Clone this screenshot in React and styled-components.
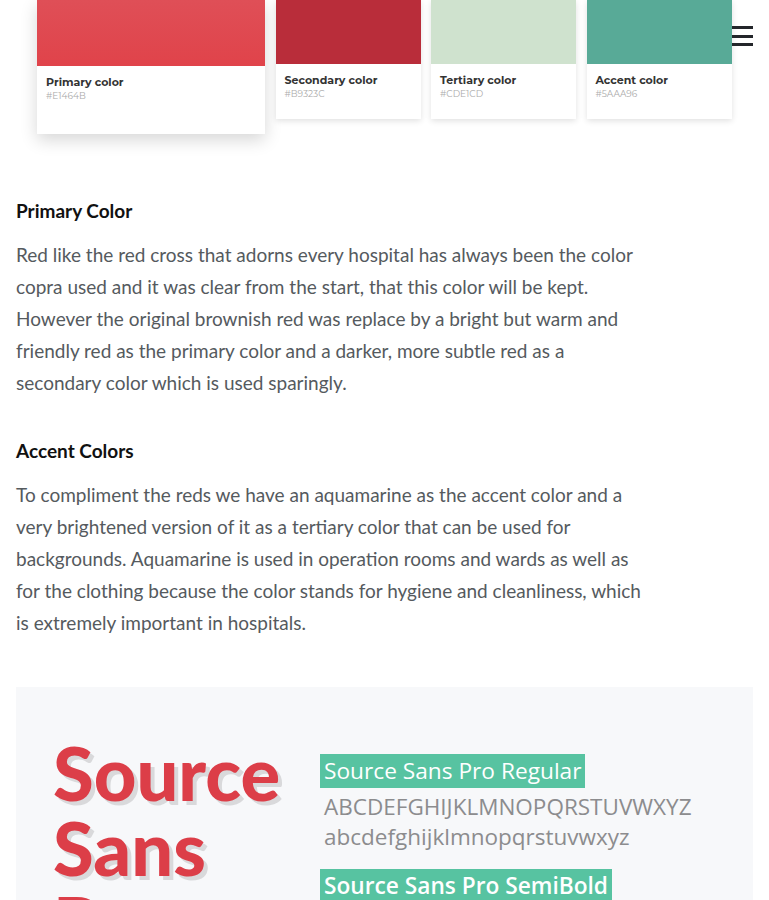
import styled, { createGlobalStyle } from "styled-components";

const GlobalStyle = createGlobalStyle`
    body {
        margin: 0;
        background: #ffffff;
        font-family: Lato, "Open Sans", sans-serif;
    }
`

const swatches = [
    {name: "Primary color", hex: "#E1464B", color: "#e0454b", big: true},
    {name: "Secondary color", hex: "#B9323C", color: "#b92d3a"},
    {name: "Tertiary color", hex: "#CDE1CD", color: "#cfe2ce"},
    {name: "Accent color", hex: "#5AAA96", color: "#58aa97"},
]

const Page = styled.div`
    padding: 0 16px;
    width: 737px;
`

const Menu = styled.button`
    position: fixed;
    top: 26px;
    right: 16px;
    width: 21px;
    height: 20px;
    padding: 0;
    border: none;
    background: transparent;
    display: flex;
    flex-direction: column;
    justify-content: space-between;
    span {
        display: block;
        height: 3px;
        background: #23262a;
    }
`

const Palette = styled.div`
    display: flex;
    align-items: flex-start;
    gap: 10.5px;
    padding: 0 0 0 21px;
    height: 150px;
`

const Card = styled.div`
    width: ${p => (p.big ? 228 : 145)}px;
    background: #fff;
    box-shadow: ${p => (p.big ? "0 6px 16px rgba(0,0,0,0.16)" : "0 2px 6px rgba(0,0,0,0.12)")};
    font-family: Montserrat, "Noto Sans", sans-serif;
`

const Swatch = styled.div`
    height: ${p => (p.big ? 66 : 64)}px;
    background: ${p => p.color};
    background-image: ${p => (p.big ? "linear-gradient(#df4f57, #e0434a)" : "none")};
`

const CardBody = styled.div`
    height: ${p => (p.big ? 68 : 55)}px;
    padding: 9px 9px 0;
    box-sizing: border-box;
    .name {
        font-size: 11px;
        font-weight: 700;
        color: #333;
        line-height: 14px;
    }
    .hex {
        font-size: 9px;
        color: #aaa;
        line-height: 13px;
    }
`

const Section = styled.section`
    margin-top: 47px;
    & + & {
        margin-top: 38px;
    }
`

const Heading = styled.h3`
    margin: 0 0 14px;
    font-size: 19px;
    font-weight: 700;
    line-height: 28px;
    color: #111;
`

const Text = styled.p`
    margin: 0;
    font-size: 19px;
    line-height: 32px;
    color: #555a5e;
    white-space: nowrap;
`

const FontPanel = styled.div`
    margin-top: 48px;
    height: 213px;
    background: #f7f8fa;
    display: flex;
    gap: 40px;
    padding: 48px 0 0 37px;
    overflow: hidden;
    box-sizing: border-box;
`

const BigName = styled.div`
    font-family: Lato, sans-serif;
    font-weight: 900;
    font-size: 74px;
    line-height: 75px;
    color: #dc3e48;
    text-shadow: 4px 4px 0 rgba(0,0,0,0.12);
    width: 227px;
`

const Weights = styled.div`
    padding-top: 19px;
    font-family: "Open Sans", sans-serif;
`

const Label = styled.div`
    display: inline-block;
    background: #57c3a1;
    color: #fff;
    font-size: 22.7px;
    font-weight: ${p => p.weight};
    line-height: 34px;
    padding: 0 4px;
`

const Alphabet = styled.div`
    font-size: 22.5px;
    color: #8c8c8e;
    line-height: 30px;
    padding: 4px 4px 17px;
    font-weight: ${p => p.weight};
`

export default function App() {
    return (
        <>
            <GlobalStyle/>
            <Menu aria-label="Menu"><span/><span/><span/></Menu>
            <Page>
                <Palette>
                    {swatches.map(s => (
                        <Card key={s.name} big={s.big}>
                            <Swatch big={s.big} color={s.color}/>
                            <CardBody big={s.big}>
                                <div className="name">{s.name}</div>
                                <div className="hex">{s.hex}</div>
                            </CardBody>
                        </Card>
                    ))}
                </Palette>
                <Section>
                    <Heading>Primary Color</Heading>
                    <Text>
                        Red like the red cross that adorns every hospital has always been the color<br/>
                        copra used and it was clear from the start, that this color will be kept.<br/>
                        However the original brownish red was replace by a bright but warm and<br/>
                        friendly red as the primary color and a darker, more subtle red as a<br/>
                        secondary color which is used sparingly.
                    </Text>
                </Section>
                <Section>
                    <Heading>Accent Colors</Heading>
                    <Text>
                        To compliment the reds we have an aquamarine as the accent color and a<br/>
                        very brightened version of it as a tertiary color that can be used for<br/>
                        backgrounds. Aquamarine is used in operation rooms and wards as well as<br/>
                        for the clothing because the color stands for hygiene and cleanliness, which<br/>
                        is extremely important in hospitals.
                    </Text>
                </Section>
                <FontPanel>
                    <BigName>Source Sans Pro</BigName>
                    <Weights>
                        <Label weight={400}>Source Sans Pro Regular</Label>
                        <Alphabet weight={400}>
                            ABCDEFGHIJKLMNOPQRSTUVWXYZ<br/>
                            abcdefghijklmnopqrstuvwxyz
                        </Alphabet>
                        <Label weight={600}>Source Sans Pro SemiBold</Label>
                    </Weights>
                </FontPanel>
            </Page>
        </>
    )
}
